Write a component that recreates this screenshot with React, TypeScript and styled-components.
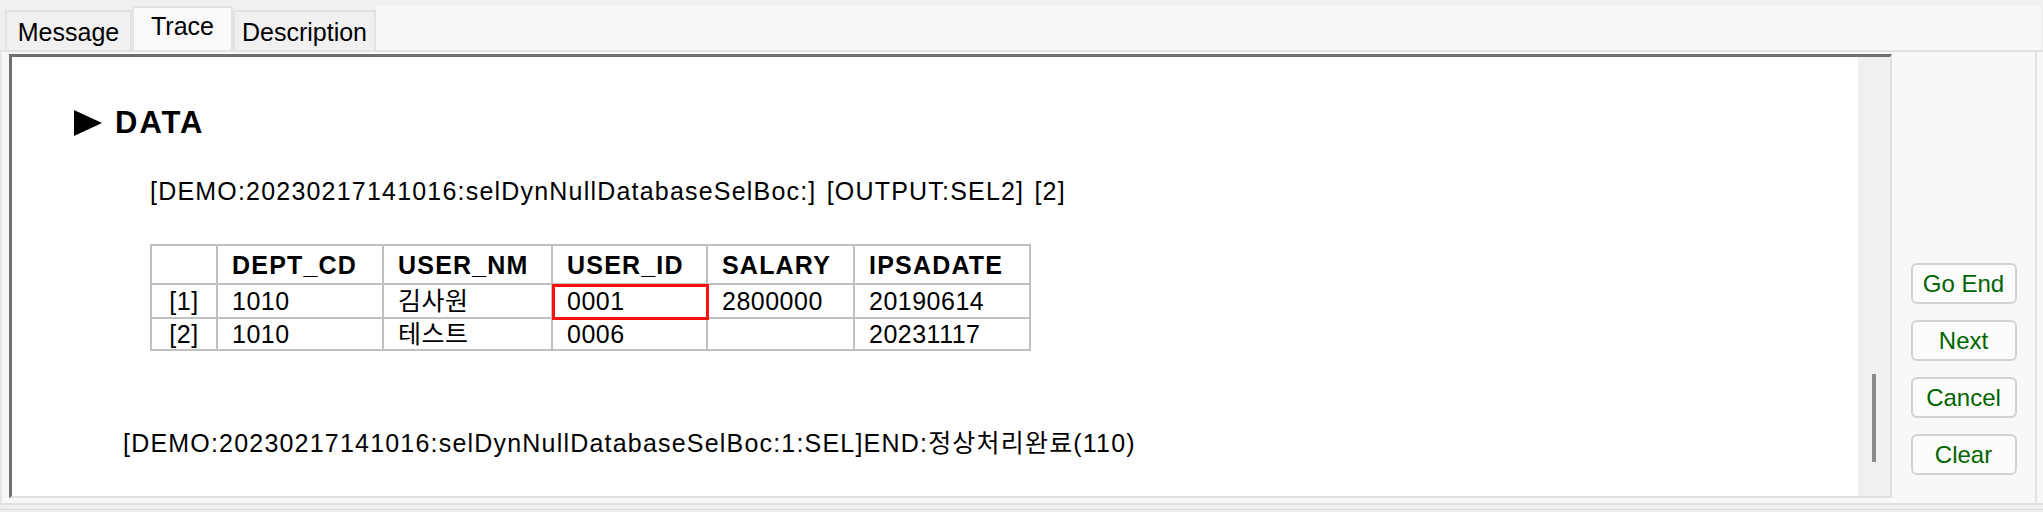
import styled, { createGlobalStyle } from "styled-components";

const GlobalStyle = createGlobalStyle`
  html, body {
    margin: 0;
    padding: 0;
    background: #f0f0f0;
  }
  body {
    font-family: "Liberation Sans", "Noto Sans CJK KR", sans-serif;
    color: #000;
  }
`;

const columns = [
  { key: "idx", label: "", width: 66 },
  { key: "dept", label: "DEPT_CD", width: 166 },
  { key: "name", label: "USER_NM", width: 169 },
  { key: "id", label: "USER_ID", width: 155 },
  { key: "salary", label: "SALARY", width: 147 },
  { key: "date", label: "IPSADATE", width: 176 },
];

const rows = [
  { idx: "[1]", dept: "1010", name: "김사원", id: "0001", salary: "2800000", date: "20190614" },
  { idx: "[2]", dept: "1010", name: "테스트", id: "0006", salary: "", date: "20231117" },
];

const tabs = [
  { label: "Message", width: 127 },
  { label: "Trace", width: 101, active: true },
  { label: "Description", width: 143 },
];

const buttons = ["Go End", "Next", "Cancel", "Clear"];

const App = () => {
  return (
    <>
      <GlobalStyle />
      <Screen>
        <TabStrip>
          {tabs.map((t) => (
            <Tab key={t.label} $width={t.width} $active={!!t.active}>
              {t.label}
            </Tab>
          ))}
          <TabFiller />
        </TabStrip>
        <Page>
          <PageRow>
            <TracePanel>
              <Content>
                <Heading>
                  <svg width="28" height="26" viewBox="0 0 28 26">
                    <polygon points="0,0 28,13 0,26" fill="#000" />
                  </svg>
                  <span>DATA</span>
                </Heading>
                <InfoLine $indent={138} $top={35}>
                  [DEMO:20230217141016:selDynNullDatabaseSelBoc:] [OUTPUT:SEL2] [2]
                </InfoLine>
                <DataTable>
                  <colgroup>
                    {columns.map((c) => (
                      <col key={c.key} style={{ width: c.width }} />
                    ))}
                  </colgroup>
                  <thead>
                    <HeadRow>
                      {columns.map((c) => (
                        <HeadCell key={c.key}>{c.label}</HeadCell>
                      ))}
                    </HeadRow>
                  </thead>
                  <tbody>
                    {rows.map((r, i) => (
                      <BodyRow key={r.idx} $height={i === 0 ? 34 : 32}>
                        <IndexCell>{r.idx}</IndexCell>
                        <Cell>{r.dept}</Cell>
                        <Cell>{r.name}</Cell>
                        <Cell $selected={i === 0}>{r.id}</Cell>
                        <Cell>{r.salary}</Cell>
                        <Cell>{r.date}</Cell>
                      </BodyRow>
                    ))}
                  </tbody>
                </DataTable>
                <InfoLine $indent={111} $top={77}>
                  [DEMO:20230217141016:selDynNullDatabaseSelBoc:1:SEL]END:정상처리완료(110)
                </InfoLine>
              </Content>
              <ScrollTrack>
                <ScrollThumb />
              </ScrollTrack>
            </TracePanel>
            <ButtonPanel>
              {buttons.map((b) => (
                <ActionButton key={b}>{b}</ActionButton>
              ))}
            </ButtonPanel>
          </PageRow>
          <BottomEdge />
        </Page>
      </Screen>
    </>
  );
};

const Screen = styled.div`
  width: 2043px;
  height: 512px;
  display: flex;
  flex-direction: column;
  background: #f0f0f0;
  overflow: hidden;
`;

const TabStrip = styled.div`
  height: 50px;
  display: flex;
  align-items: flex-end;
  padding-left: 5px;
  box-sizing: border-box;
`;

const Tab = styled.div<{ $width: number; $active: boolean }>`
  width: ${({ $width }) => $width}px;
  height: ${({ $active }) => ($active ? 44 : 40)}px;
  box-sizing: border-box;
  border: 2px solid #e3e3e3;
  border-bottom: none;
  background: ${({ $active }) => ($active ? "#f9f9f9" : "#f0f0f0")};
  font-size: 25px;
  display: flex;
  justify-content: center;
  padding-top: ${({ $active }) => ($active ? 4 : 6)}px;
  line-height: 28px;
  color: #000;
`;

const TabFiller = styled.div`
  flex: 1;
  height: 44px;
  margin-right: 2px;
  background: #f8f8f8;
`;

const Page = styled.div`
  flex: 1;
  display: flex;
  flex-direction: column;
`;

const PageRow = styled.div`
  height: 455px;
  display: flex;
  box-sizing: border-box;
  background: #f8f8f8;
  border-top: 2px solid #e3e3e3;
  border-left: 2px solid #e6e6e6;
  border-bottom: 2px solid #e0e0e0;
  padding-left: 7px;
`;

const TracePanel = styled.div`
  width: 1883px;
  height: 444px;
  margin-top: 2px;
  box-sizing: border-box;
  display: flex;
  border-top: 3px solid #6f6f6f;
  border-left: 3px solid #6f6f6f;
  border-right: 2px solid #e0e0e0;
  border-bottom: 2px solid #e0e0e0;
`;

const Content = styled.div`
  flex: 1;
  background: #fff;
  padding-top: 48px;
  display: flex;
  flex-direction: column;
  align-items: flex-start;
`;

const Heading = styled.div`
  margin-left: 62px;
  height: 36px;
  display: flex;
  align-items: center;
  gap: 13px;
  font-size: 31px;
  font-weight: bold;
  letter-spacing: 2px;
  line-height: 36px;

  svg {
    display: block;
  }
`;

const InfoLine = styled.div<{ $indent: number; $top: number }>`
  margin-left: ${({ $indent }) => $indent}px;
  margin-top: ${({ $top }) => $top}px;
  font-size: 25px;
  letter-spacing: 1.2px;
  word-spacing: 2px;
  line-height: 30px;
  white-space: pre;
`;

const DataTable = styled.table`
  margin-left: 138px;
  margin-top: 38px;
  border-collapse: collapse;
  table-layout: fixed;
  width: 879px;
  border: 2px solid #c0c0c0;
  font-size: 25px;
  letter-spacing: 0.5px;
`;

const HeadRow = styled.tr`
  height: 39px;
`;

const BodyRow = styled.tr<{ $height: number }>`
  height: ${({ $height }) => $height}px;
`;

const HeadCell = styled.th`
  border: 2px solid #c0c0c0;
  padding: 0 0 0 14px;
  text-align: left;
  font-weight: bold;
  letter-spacing: 1.2px;
  line-height: 28px;
`;

const Cell = styled.td<{ $selected?: boolean }>`
  position: relative;
  border: 2px solid #c0c0c0;
  padding: 0 0 0 14px;
  line-height: 28px;

  ${({ $selected }) =>
    $selected &&
    `
    &::after {
      content: "";
      position: absolute;
      left: -1px;
      top: -1px;
      right: -3px;
      bottom: -3px;
      border: 3px solid #ff1010;
    }
  `}
`;

const IndexCell = styled.td`
  border: 2px solid #c0c0c0;
  text-align: center;
  line-height: 28px;
`;

const ScrollTrack = styled.div`
  width: 32px;
  background: #f0f0f0;
  display: flex;
  flex-direction: column;
  align-items: center;
  padding-top: 317px;
  box-sizing: border-box;
`;

const ScrollThumb = styled.div`
  width: 4px;
  height: 88px;
  background: #8a8a8a;
`;

const ButtonPanel = styled.div`
  width: 145px;
  margin-top: -2px;
  box-sizing: border-box;
  border-top: 2px solid #e3e3e3;
  border-right: 2px solid #e3e3e3;
  background: #f8f8f8;
  display: flex;
  flex-direction: column;
  align-items: center;
  justify-content: flex-end;
  gap: 16px;
  padding-bottom: 28px;
`;

const ActionButton = styled.button`
  width: 106px;
  height: 41px;
  box-sizing: border-box;
  border: 2px solid #d2d2d2;
  border-radius: 6px;
  background: #fcfcfc;
  color: #006400;
  font-family: "Liberation Sans", sans-serif;
  font-size: 24px;
  padding: 0;
  cursor: pointer;
`;

const BottomEdge = styled.div`
  flex: 1;
  border-bottom: 1px solid #d8d8d8;
  margin-bottom: 2px;
`;

export default App;
